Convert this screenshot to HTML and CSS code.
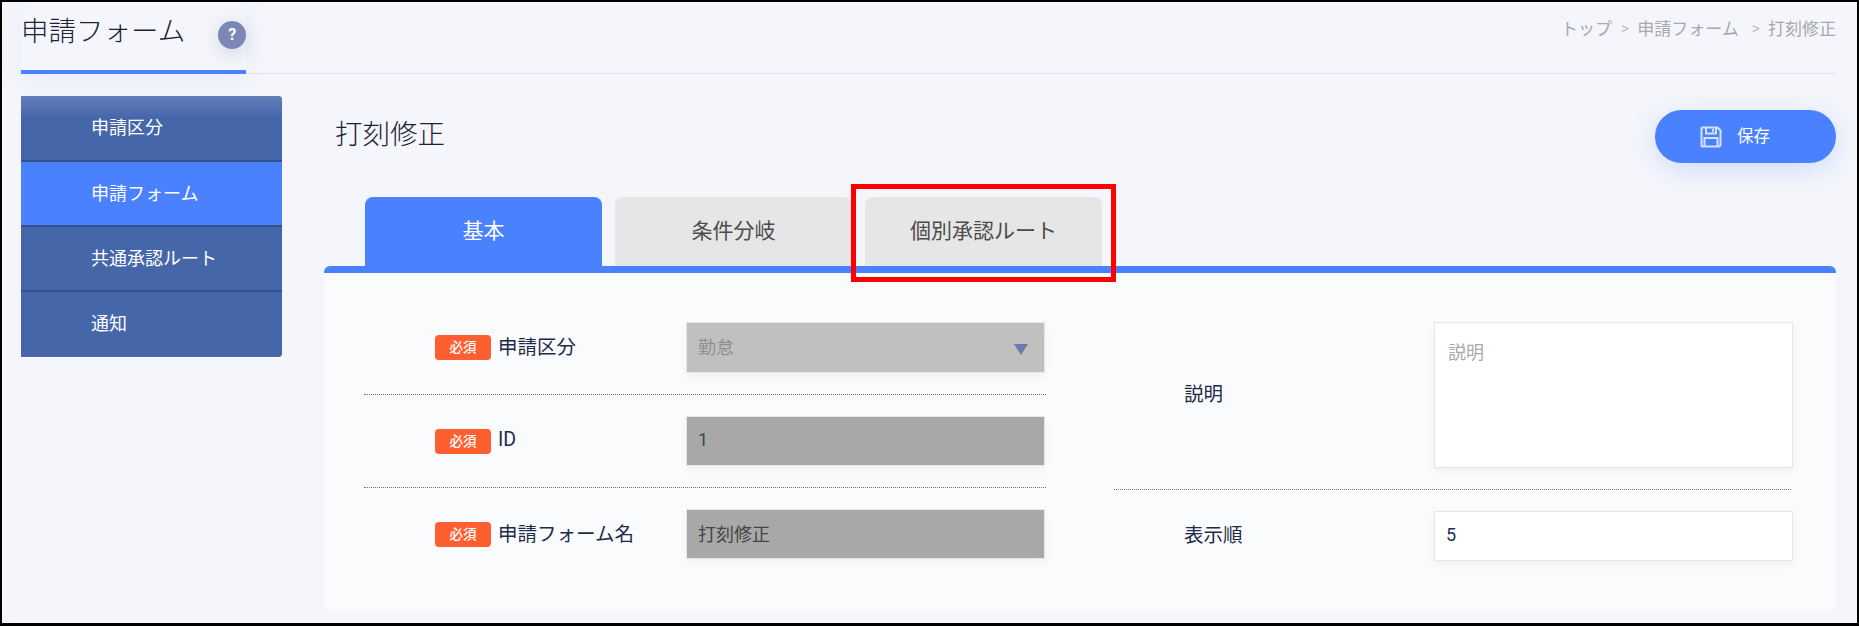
FILE: index.html
```html
<!DOCTYPE html>
<html lang="ja">
<head>
<meta charset="utf-8">
<title>打刻修正</title>
<link rel="stylesheet" href="styles.css">
</head>
<body>
<div class="frame">
  <header class="top">
    <div class="top-left">
      <h1 class="page-title">申請フォーム</h1>
      <span class="help">?</span>
    </div>
    <nav class="crumbs"><span>トップ</span><span class="sep">&gt;</span><span>申請フォーム</span><span class="sep sep-wide">&gt;</span><span>打刻修正</span></nav>
  </header>
  <div class="body">
    <aside class="side">
      <a class="side-item">申請区分</a>
      <a class="side-item active">申請フォーム</a>
      <a class="side-item">共通承認ルート</a>
      <a class="side-item">通知</a>
    </aside>
    <main class="main">
      <div class="main-head">
        <h2 class="form-title">打刻修正</h2>
        <button class="save" type="button">
          <svg class="save-icon" viewBox="0 0 22 22" width="22" height="22" fill="none" stroke="#d5e2ff" stroke-width="2">
            <path d="M2.5 1.5h15l3 3v14a2 2 0 0 1-2 2h-16a1 1 0 0 1-1-1v-17a1 1 0 0 1 1-1z"/>
            <path d="M6 1.5v6h10v-6M13 3v3"/>
            <path d="M4.5 20v-8h13v8"/>
          </svg>
          <span class="save-text">保存</span>
        </button>
      </div>
      <div class="tabs">
        <div class="tab on">基本</div>
        <div class="tab">条件分岐</div>
        <div class="tab">個別承認ルート</div>
        <div class="callout"></div>
      </div>
      <section class="panel">
        <div class="col col-left">
          <div class="row">
            <div class="label"><span class="req">必須</span>申請区分</div>
            <div class="control select"><span>勤怠</span><svg class="caret" viewBox="0 0 14 11" width="14" height="11"><path d="M0 0h14L7 11z" fill="#6d78ab"/></svg></div>
          </div>
          <div class="row">
            <div class="label"><span class="req">必須</span>ID</div>
            <input class="control locked" value="1" readonly>
          </div>
          <div class="row last">
            <div class="label"><span class="req">必須</span>申請フォーム名</div>
            <input class="control locked" value="打刻修正" readonly>
          </div>
        </div>
        <div class="col col-right">
          <div class="row">
            <div class="label plain">説明</div>
            <textarea class="control area" placeholder="説明"></textarea>
          </div>
          <div class="row last">
            <div class="label plain">表示順</div>
            <input class="control" value="5">
          </div>
        </div>
      </section>
    </main>
  </div>
</div>
</body>
</html>
```
FILE: styles.css
```css
* { box-sizing: border-box; }
html, body { margin: 0; padding: 0; }
body {
  font-family: Roboto, "Noto Sans CJK JP", sans-serif;
  color: #25304f;
  background: #f5f6fb;
  overflow: hidden;
}
.frame {
  width: 1859px;
  height: 626px;
  border: 2px solid #000;
  border-bottom-width: 3px;
  background: #f5f6fb;
  padding: 0 21px 0 19px;
  overflow: hidden;
}
.top {
  height: 72px;
  display: flex;
  justify-content: space-between;
  border-bottom: 1px solid #e0e2f0;
}
.top-left {
  width: 225px;
  height: 72px;
  border-bottom: 4px solid #4a81ff;
  display: flex;
  align-items: flex-start;
  box-shadow: 0 8px 24px rgba(74, 129, 255, 0.07);
}
.page-title {
  margin: 10px 0 0;
  font-size: 27.5px;
  line-height: 40px;
  font-weight: 300;
  white-space: nowrap;
  color: #1b2238;
}
.help {
  margin: 19px 0 0 33px;
  width: 28px;
  height: 28px;
  flex: none;
  border-radius: 50%;
  background: #7b87b5;
  color: #fff;
  font-size: 16px;
  font-weight: 700;
  line-height: 28px;
  text-align: center;
  box-shadow: 0 4px 18px rgba(90, 100, 150, 0.22);
}
.crumbs {
  margin-top: 14px;
  font-size: 17px;
  line-height: 26px;
  color: #a6a8ad;
  font-weight: 400;
  display: flex;
  height: 26px;
}
.sep { margin: 0 8px 0 9px; font-size: 16px; font-weight: 300; }
.sep-wide { margin-left: 13px; }
.body {
  display: flex;
  align-items: flex-start;
  margin-top: 22px;
}
.side {
  width: 261px;
  flex: none;
  display: flex;
  flex-direction: column;
  border-radius: 0 4px 4px 0;
  overflow: hidden;
  background: #4666aa;
  box-shadow: 0 1px 0 #fff;
}
.side-item {
  height: 65px;
  padding: 12px 0 0 70px;
  font-size: 18px;
  line-height: 40px;
  color: #fff;
  background: #4666aa;
  border-bottom: 2px solid #34508c;
}
.side-item:first-child {
  height: 66px;
  background: linear-gradient(180deg, #6480bb 0, #4666aa 22px);
}
.side-item:last-child { border-bottom: 0; }
.side-item.active { background: #4a81ff; }
.main {
  margin-left: 42px;
  width: 1512px;
  flex: none;
}
.main-head {
  height: 101px;
  display: flex;
  justify-content: space-between;
  align-items: flex-start;
}
.form-title {
  margin: 19px 0 0 11px;
  font-size: 27.5px;
  line-height: 40px;
  font-weight: 300;
  color: #1b2238;
}
.save {
  margin: 14px 0 0 0;
  width: 181px;
  height: 53px;
  border: 0;
  border-radius: 27px;
  background: #4a81ff;
  color: #fff;
  font-family: inherit;
  font-size: 16.5px;
  display: flex;
  align-items: center;
  padding: 0 0 0 45px;
  gap: 15px;
  box-shadow: 0 6px 26px rgba(74, 129, 255, 0.22);
}
.save-icon { flex: none; }
.save-text { margin-bottom: 4px; }
.tabs {
  position: relative;
  display: flex;
  gap: 13px;
  padding-left: 41px;
  height: 69px;
}
.tab {
  width: 237px;
  height: 69px;
  border-radius: 8px 8px 0 0;
  background: #e6e6e6;
  color: #4b4b4b;
  font-size: 21px;
  font-weight: 400;
  line-height: 69px;
  text-align: center;
}
.tab.on { background: #4a81ff; color: #fff; }
.callout {
  position: absolute;
  left: 527px;
  top: -13px;
  width: 265px;
  height: 98px;
  border: 5px solid #f00;
  z-index: 2;
}
.panel {
  height: 343px;
  border-top: 7px solid #4a81ff;
  border-radius: 6px 6px 4px 4px;
  background: #fafbfd;
  display: flex;
  padding: 49px 0 0 40px;
}
.col-left { width: 682px; }
.col-right { width: 677px; margin-left: 68px; }
.row {
  display: flex;
  align-items: center;
  padding-bottom: 21px;
  margin-bottom: 21px;
  border-bottom: 1px dotted #6f6f6f;
}
.row.last { border-bottom: 0; padding-bottom: 0; margin-bottom: 0; }
.col-left .row { padding-right: 1px; }
.col-right .control { margin-right: -2px; }
.label {
  flex: 1;
  display: flex;
  align-items: center;
  padding: 0 0 4px 71px;
  font-size: 19.5px;
  font-weight: 400;
  color: #1f2a4a;
}
.label.plain { padding: 0 0 6px 70px; }
.req {
  width: 56px;
  height: 25px;
  margin: 4px 7px 0 0;
  border-radius: 4px;
  background: #ff5f30;
  color: #fff;
  font-size: 13.5px;
  font-weight: 500;
  line-height: 24px;
  text-align: center;
  flex: none;
}
.control {
  display: block;
  flex: none;
  width: 359px;
  height: 50px;
  margin: 0;
  padding: 0 11px 3px;
  border: 1px solid #e6e6e6;
  border-radius: 0;
  outline: 0;
  background: #fff;
  font-family: inherit;
  font-size: 18px;
  font-weight: 400;
  color: #25304f;
  box-shadow: 0 4px 8px rgba(0, 0, 0, 0.04);
}
.select {
  height: 51px;
  display: flex;
  align-items: center;
  justify-content: space-between;
  background: #c0c1bf;
  color: #8e8f8e;
  padding-right: 16px;
}
.caret { margin: 7px 0 0; }
.locked { background: #a8a8a8; color: #444; }
.area {
  height: 146px;
  padding: 16px 13px 0;
  line-height: 28px;
  resize: none;
}
.area::placeholder { color: #a9a9a9; opacity: 1; }
```
